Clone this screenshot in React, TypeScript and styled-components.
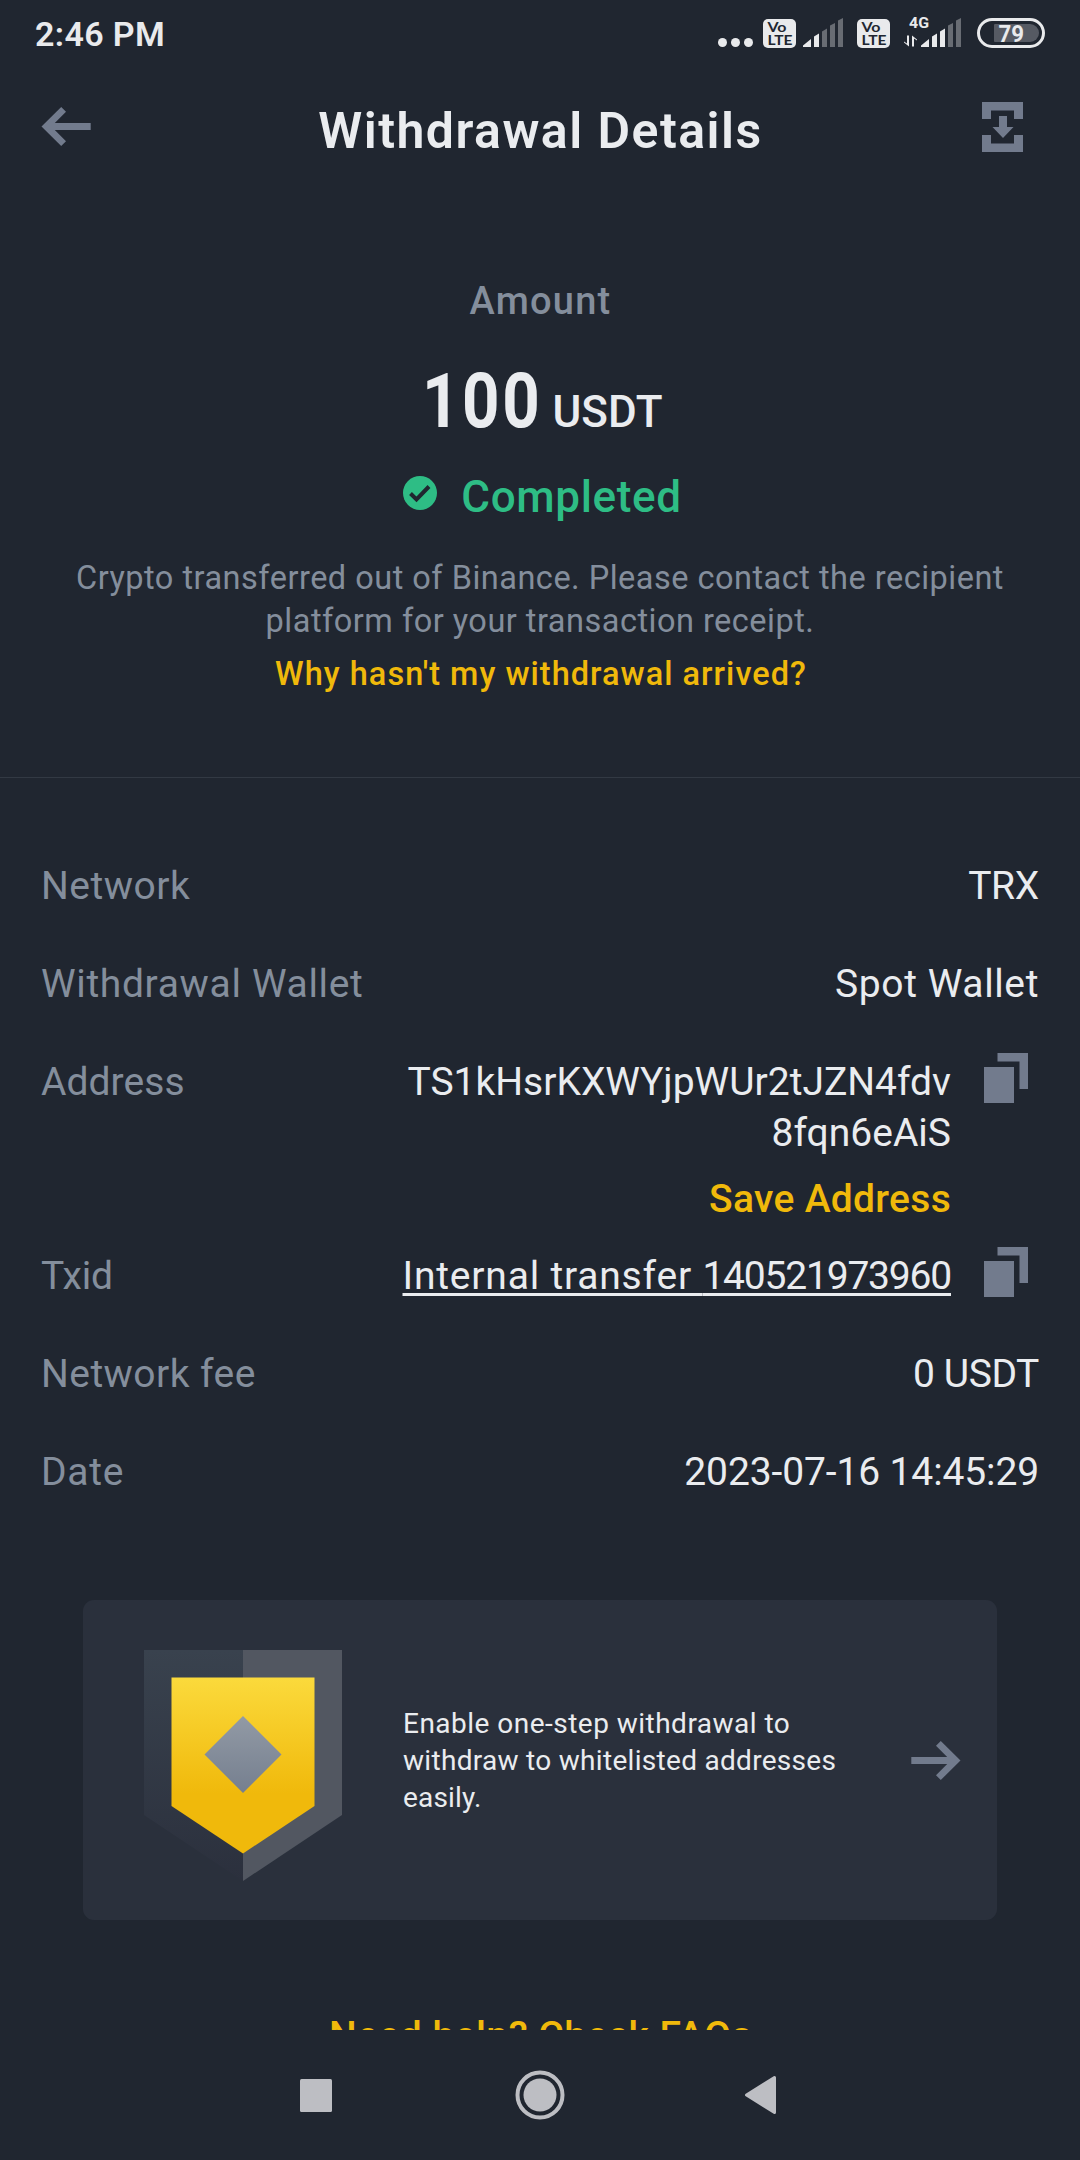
import React from 'react';
import styled, { createGlobalStyle } from 'styled-components';

const color = {
  page: '#202630',
  card: '#2a303c',
  line: '#323943',
  text: '#eaecef',
  muted: '#848e9c',
  icon: '#727b8d',
  yellow: '#f0b90b',
  green: '#2ebd85',
  system: '#e9eaec',
  systemDim: '#686c73',
  nav: '#bdbec3',
};

const GlobalStyle = createGlobalStyle`
  html, body { margin: 0; padding: 0; background: ${color.page}; }
  *, *::before, *::after { box-sizing: border-box; }
`;

const Screen = styled.div`
  width: 1080px;
  height: 2160px;
  display: flex;
  flex-direction: column;
  overflow: hidden;
  background: ${color.page};
  color: ${color.text};
  font-family: Roboto, 'Open Sans', sans-serif;
`;

const StatusBar = styled.div`
  height: 66px;
  flex: none;
  display: flex;
  justify-content: space-between;
  align-items: flex-start;
  padding: 14px 35px 0;
`;

const Clock = styled.div`
  font-size: 34px;
  line-height: 40px;
  font-weight: 600;
  letter-spacing: 0.35px;
  color: ${color.system};
`;

const StatusIcons = styled.div`
  display: flex;
  align-items: flex-start;
`;

const Glyph = styled.svg<{ $ml?: number; $mt?: number }>`
  display: block;
  flex: none;
  margin-left: ${(p) => p.$ml ?? 0}px;
  margin-top: ${(p) => p.$mt ?? 0}px;
`;

const Header = styled.header`
  height: 120px;
  flex: none;
  display: grid;
  grid-template-columns: 1fr auto 1fr;
  align-items: start;
  padding: 0 57px 0 41px;
`;

const BackAction = styled.div`
  margin-top: 41px;
`;

const Title = styled.h1`
  margin: 35px 0 0 17px;
  font-size: 50px;
  line-height: 60px;
  font-weight: 600;
  letter-spacing: 1.48px;
`;

const HeaderAction = styled.div`
  display: flex;
  justify-content: flex-end;
  margin-top: 36px;
`;

const Content = styled.main`
  flex: 1;
  min-height: 0;
  overflow: hidden;
`;

const Summary = styled.section`
  height: 592px;
  padding-top: 91px;
  display: flex;
  flex-direction: column;
  align-items: center;
  text-align: center;
  border-bottom: 1px solid ${color.line};
`;

const Caption = styled.div`
  padding-left: 1px;
  font-size: 38px;
  line-height: 48px;
  font-weight: 500;
  letter-spacing: 1.24px;
  color: ${color.muted};
`;

const Amount = styled.div`
  display: flex;
  align-items: baseline;
  height: 90px;
  margin-top: 31px;
  padding-left: 4px;
  line-height: 90px;
`;

const Figure = styled.span`
  display: block;
  width: 131px;
  text-align: left;
  font-size: 76px;
  font-weight: 700;
  letter-spacing: 3px;
  transform: scaleX(0.86);
  transform-origin: left;
`;

const Unit = styled.span`
  font-size: 44px;
  font-weight: 500;
`;

const State = styled.div`
  display: flex;
  align-items: flex-start;
  gap: 24px;
  margin-top: 23px;
  padding-left: 5px;
  font-size: 44px;
  line-height: 56px;
  font-weight: 500;
  letter-spacing: 0.66px;
  color: ${color.green};
`;

const Notice = styled.p`
  margin: 32px 0 0;
  font-size: 32.5px;
  line-height: 43px;
  letter-spacing: 0.49px;
  color: ${color.muted};
`;

const NoticeLink = styled.a`
  margin-top: 10px;
  padding-left: 2px;
  font-size: 32.5px;
  line-height: 43px;
  font-weight: 500;
  letter-spacing: 1.01px;
  color: ${color.yellow};
`;

const Details = styled.section`
  padding: 82px 41px 0;
  font-size: 39px;
  line-height: 52px;
`;

const Row = styled.div<{ $gap?: number }>`
  display: flex;
  justify-content: space-between;
  align-items: flex-start;
  margin-bottom: ${(p) => p.$gap ?? 46}px;
`;

const Label = styled.div<{ $track?: number }>`
  letter-spacing: ${(p) => p.$track ?? 0.5}px;
  color: ${color.muted};
`;

const Value = styled.div<{ $track?: number }>`
  text-align: right;
  letter-spacing: ${(p) => p.$track ?? 0}px;
`;

const AddressValue = styled.div`
  padding-top: 1px;
  text-align: right;
  line-height: 51px;
`;

const Copyable = styled.div`
  display: flex;
  align-items: flex-start;
  gap: 33px;
  padding-right: 11px;
`;

const TxLink = styled.a`
  letter-spacing: 0.8px;
  text-decoration: underline;
  text-decoration-thickness: 2.5px;
  text-underline-offset: 4px;
  text-decoration-skip-ink: none;
`;

const TxNumber = styled.span`
  letter-spacing: -1.2px;
`;

const SaveLink = styled.div`
  margin-top: 14px;
  text-align: right;
  font-weight: 500;
  letter-spacing: 0.3px;
  color: ${color.yellow};
`;

const Promo = styled.section`
  height: 320px;
  margin: 102px 83px 0;
  padding: 0 36px 0 61px;
  display: flex;
  align-items: center;
  border-radius: 11px;
  background: ${color.card};
`;

const PromoText = styled.p`
  flex: 1;
  margin: 0 0 0 61px;
  font-size: 28px;
  line-height: 37px;
`;

const PromoLine = styled.span<{ $track: number }>`
  display: block;
  letter-spacing: ${(p) => p.$track}px;
`;

const Help = styled.div`
  margin-top: 90px;
  padding-left: 1px;
  text-align: center;
  font-size: 39px;
  line-height: 52px;
  font-weight: 500;
  letter-spacing: 0.47px;
  color: ${color.yellow};
`;

const NavBar = styled.nav`
  height: 130px;
  flex: none;
  display: flex;
  align-items: center;
  padding-left: 300px;
`;

const VoLte = ({ ml }: { ml: number }) => (
  <Glyph width="33" height="29" $ml={ml} $mt={5}>
    <rect width="33" height="29" rx="5" fill={color.system} />
    <g fill={color.page} fontFamily="Lato, sans-serif" fontWeight="700" fontSize="13.5">
      <text x="4.5" y="12.5" textLength="19" lengthAdjust="spacingAndGlyphs">Vo</text>
      <text x="4.5" y="25.5" textLength="25" lengthAdjust="spacingAndGlyphs">LTE</text>
    </g>
  </Glyph>
);

const Bars = ({ ml }: { ml: number }) => (
  <Glyph width="40" height="29" $ml={ml} $mt={4}>
    <path d="M0 27.5L8 21V29H0Z M11 18.5L16 15.5V29H11Z" fill={color.system} />
    <path d="M19 13.5L24 10.5V29H19Z M27 7.5L32 5V29H27Z M35 2.5L40 0V29H35Z" fill={color.systemDim} />
  </Glyph>
);

/* Mobile data: the third bar is lit as well */
const DataBars = ({ ml }: { ml: number }) => (
  <Glyph width="40" height="29" $ml={ml} $mt={4}>
    <path d="M0 27.5L8 21V29H0Z M11 18.5L16 15.5V29H11Z M19 13.5L24 10.5V29H19Z" fill={color.system} />
    <path d="M27 7.5L32 5V29H27Z M35 2.5L40 0V29H35Z" fill={color.systemDim} />
  </Glyph>
);

const ArrowIcon = ({ flip }: { flip?: boolean }) => (
  <Glyph width="50" height="39" viewBox="0 0 50 39">
    <g transform={flip ? 'translate(50 0) scale(-1 1)' : undefined} fill={color.icon}>
      <path d="M0.3 16H36.2L25 4.8L29.8 0L49.5 19.5L29.8 39L25 34.2L36.2 23H0.3Z" />
    </g>
  </Glyph>
);

const CopyIcon = () => (
  <Glyph width="44" height="50" $mt={-3} fill={color.icon}>
    <path d="M0 14H30V50H0Z" />
    <path d="M13.5 0H44V36H35.5V8.5H13.5Z" />
  </Glyph>
);

const Shield = () => (
  <Glyph width="198" height="231" viewBox="0 0 198 231" $mt={11}>
    <defs>
      <linearGradient id="left" x1="0" y1="0" x2="0" y2="1">
        <stop offset="0" stopColor="#39424e" />
        <stop offset="1" stopColor="#2b303d" />
      </linearGradient>
      <linearGradient id="gold" x1="0" y1="0" x2="0" y2="1">
        <stop offset="0" stopColor="#fbda3c" />
        <stop offset="0.66" stopColor="#f0b90b" />
      </linearGradient>
      <linearGradient id="gem" x1="0" y1="0" x2="0" y2="1">
        <stop offset="0" stopColor="#929aa5" />
        <stop offset="1" stopColor="#757f8f" />
      </linearGradient>
    </defs>
    <path d="M0 0H99V231L0 165Z" fill="url(#left)" />
    <path d="M99 0H198V165L99 231Z" fill="#525761" />
    <path d="M27.5 27.5H170.5V156L99 203.5L27.5 156Z" fill="url(#gold)" />
    <path d="M99 66L137.5 104.5L99 143L60.5 104.5Z" fill="url(#gem)" />
  </Glyph>
);

export default function App() {
  return (
    <Screen>
      <GlobalStyle />
      <StatusBar>
        <Clock>2:46 PM</Clock>
        <StatusIcons>
          <Glyph width="35" height="9" $mt={24} fill={color.system}>
            <circle cx="4.5" cy="4.5" r="4.5" />
            <circle cx="17.5" cy="4.5" r="4.5" />
            <circle cx="30.5" cy="4.5" r="4.5" />
          </Glyph>
          <VoLte ml={10} />
          <Bars ml={7} />
          <VoLte ml={14} />
          <Glyph width="32" height="34" $ml={13} fill={color.system}>
            <text
              x="6"
              y="13.5"
              fontFamily="Roboto, sans-serif"
              fontWeight="700"
              fontSize="15.5"
              textLength="20"
              lengthAdjust="spacingAndGlyphs"
            >
              4G
            </text>
            <path d="M4 21.5H6V32.5L1 28.5V27.5L4 29.5Z" />
            <path d="M9 32.5H11V24.5L14 26.5V25.5L9 21.5Z" />
          </Glyph>
          <DataBars ml={-14} />
          <Glyph width="68" height="30" $ml={16} $mt={4}>
            <rect x="1.5" y="1.5" width="65" height="27" rx="13.5" fill="none" stroke={color.system} strokeWidth="3" />
            <path d="M18 6H53A9 9 0 0 1 53 24H18A1 1 0 0 1 17 23V7A1 1 0 0 1 18 6Z" fill="#565a63" />
            <text
              x="21.5"
              y="24"
              fill={color.system}
              fontFamily="Roboto, sans-serif"
              fontWeight="700"
              fontSize="24.5"
              textLength="25.5"
              lengthAdjust="spacingAndGlyphs"
            >
              79
            </text>
          </Glyph>
        </StatusIcons>
      </StatusBar>

      <Header>
        <BackAction>
          <ArrowIcon flip />
        </BackAction>
        <Title>Withdrawal Details</Title>
        <HeaderAction>
          <svg width="41" height="50" viewBox="0 0 41 50" fill={color.icon}>
            <path d="M0 0H41V17H32V8.5H9V17H0Z" />
            <path d="M0 33H9V41.5H32V33H41V50H0Z" />
            <path d="M17 14H25V25H31.5L21 36L10.5 25H17Z" />
          </svg>
        </HeaderAction>
      </Header>

      <Content>
        <Summary>
          <Caption>Amount</Caption>
          <Amount>
            <Figure>100</Figure>
            <Unit>USDT</Unit>
          </Amount>
          <State>
            <Glyph width="34" height="34" viewBox="0 0 34 34" $mt={7}>
              <circle cx="17" cy="17" r="17" fill={color.green} />
              <path d="M7.5 17.5L13.5 23.5L26 10.5" fill="none" stroke={color.page} strokeWidth="4" />
            </Glyph>
            Completed
          </State>
          <Notice>
            Crypto transferred out of Binance. Please contact the recipient
            <br />
            platform for your transaction receipt.
          </Notice>
          <NoticeLink>Why hasn't my withdrawal arrived?</NoticeLink>
        </Summary>

        <Details>
          <Row>
            <Label>Network</Label>
            <Value $track={-0.3}>TRX</Value>
          </Row>
          <Row>
            <Label $track={0.66}>Withdrawal Wallet</Label>
            <Value $track={0.6}>Spot Wallet</Value>
          </Row>
          <Row $gap={25}>
            <Label $track={0.05}>Address</Label>
            <Copyable>
              <div>
                <AddressValue>
                  TS1kHsrKXWYjpWUr2tJZN4fdv
                  <br />
                  8fqn6eAiS
                </AddressValue>
                <SaveLink>Save Address</SaveLink>
              </div>
              <CopyIcon />
            </Copyable>
          </Row>
          <Row>
            <Label $track={-0.2}>Txid</Label>
            <Copyable>
              <TxLink>
                Internal transfer <TxNumber>140521973960</TxNumber>
              </TxLink>
              <CopyIcon />
            </Copyable>
          </Row>
          <Row>
            <Label $track={0.45}>Network fee</Label>
            <Value $track={-0.4}>0 USDT</Value>
          </Row>
          <Row $gap={0}>
            <Label $track={0.7}>Date</Label>
            <Value $track={-0.12}>2023-07-16 14:45:29</Value>
          </Row>
        </Details>

        <Promo>
          <Shield />
          <PromoText>
            <PromoLine $track={0.48}>Enable one-step withdrawal to</PromoLine>
            <PromoLine $track={0.3}>withdraw to whitelisted addresses</PromoLine>
            <PromoLine $track={0.18}>easily.</PromoLine>
          </PromoText>
          <ArrowIcon />
        </Promo>

        <Help>Need help? Check FAQs</Help>
      </Content>

      <NavBar>
        <Glyph width="32" height="33">
          <rect width="32" height="33" rx="1.5" fill={color.nav} />
        </Glyph>
        <Glyph width="50" height="50" $ml={183}>
          <circle cx="25" cy="25" r="22.5" fill="none" stroke={color.nav} strokeWidth="4" />
          <circle cx="25" cy="25" r="16.5" fill={color.nav} />
        </Glyph>
        <Glyph width="33" height="40" $ml={179}>
          <path
            d="M2.5 20L30.5 2.5V37.5Z"
            fill={color.nav}
            stroke={color.nav}
            strokeWidth="3"
            strokeLinejoin="round"
          />
        </Glyph>
      </NavBar>
    </Screen>
  );
}
